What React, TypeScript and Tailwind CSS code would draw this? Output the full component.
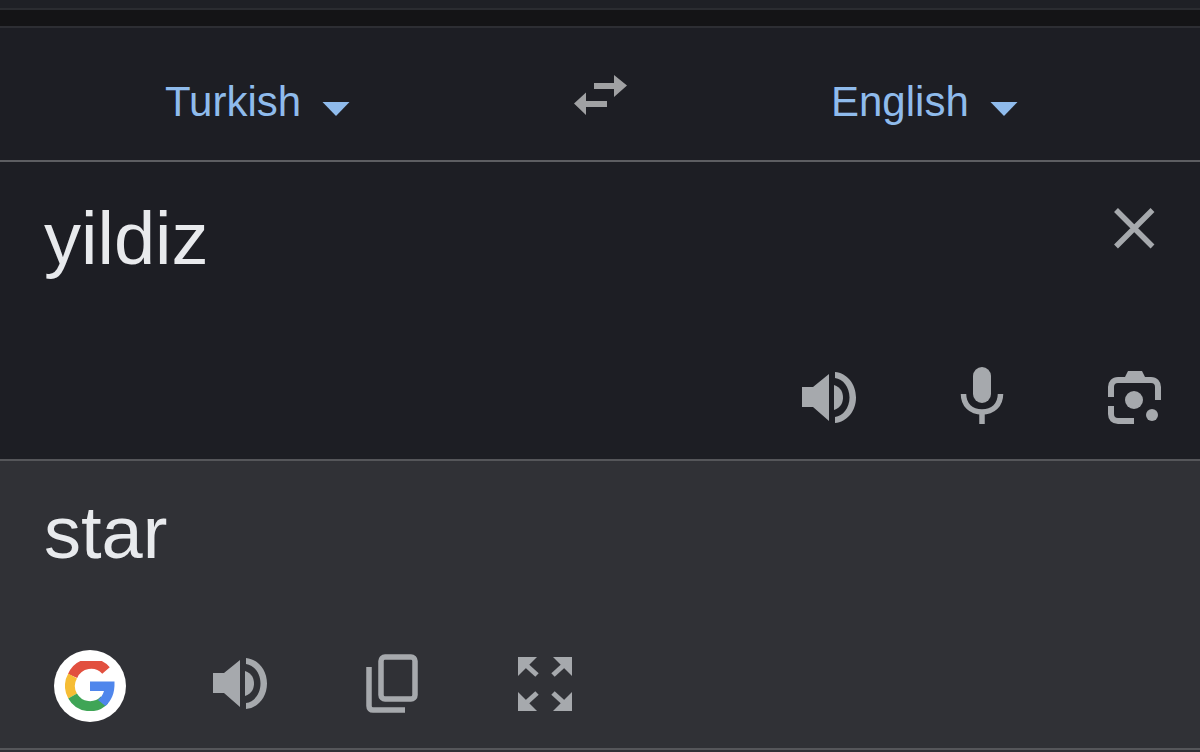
import React from "react";

const ICON = "#a6a9ad";

function Speaker() {
  return (
    <svg width="58" height="56" viewBox="0 0 58 56" fill={ICON} className="shrink-0 block">
      <path d="M2 17H13L29 4V51L13 37H2Z" />
      <path d="M34 15C41 17 43 23 43 27.5C43 32 41 38 34 40Z" />
      <path d="M35 2C47 3 56 14 56 27.5C56 41 47 52 35 53V47C43 46 49.5 38 49.5 27.5C49.5 17 43 9 35 8Z" />
    </svg>
  );
}

function Triangle() {
  return (
    <svg width="28" height="14" viewBox="0 0 28 14" fill="#8fbbec" className="shrink-0 block">
      <path d="M0.5 0H27.5L14 14Z" />
    </svg>
  );
}

function Lang({ name, className }: { name: string; className: string }) {
  return (
    <div className={`flex items-center ${className}`}>
      <span className="text-[42px] leading-[48px] text-[#8fbbec]">{name}</span>
      <div className="ml-[21px] mt-[13px]">
        <Triangle />
      </div>
    </div>
  );
}

function GoogleG() {
  return (
    <svg width="50" height="50" viewBox="0 0 50 50" fill="none" className="block">
      <path d="M41 9.5A20 20 0 0 0 7.6 15" stroke="#e2503f" strokeWidth="10" />
      <path d="M7.6 15A20 20 0 0 0 7.6 35" stroke="#f6bd35" strokeWidth="10" />
      <path d="M7.6 35A20 20 0 0 0 39.5 39" stroke="#3fa556" strokeWidth="10" />
      <path d="M49.5 20.5H25V30H39C38 34 35.5 37 33 39L40.5 45C46 40 50 33 49.5 20.5Z" fill="#4f86ec" />
    </svg>
  );
}

export default function App() {
  return (
    <div
      className="w-[1200px] h-[752px] overflow-hidden flex flex-col bg-[#1d1e24] text-[#e8eaed]"
      style={{ fontFamily: '"Liberation Sans", Arial, sans-serif' }}
    >
      <div className="h-[10px] shrink-0 bg-[#1f2026] border-b-2 border-[#2b2c31]" />
      <div className="h-[18px] shrink-0 bg-[#141416] border-b-2 border-[#2d2e33]" />

      <div className="h-[134px] shrink-0 flex border-b-2 border-[#5d5e62] pl-[165px] items-start">
        <Lang name="Turkish" className="w-[184px] mt-[50px]" />
        <svg width="54" height="42" viewBox="0 0 54 42" fill="#a0a1a3" className="shrink-0 block ml-[225px] mt-[46px]">
          <path d="M20 9H40V1L53 11.500L40 23V15H20Z" />
          <path d="M33 27H12V18.500L0 29.500L12 41V33H33Z" />
        </svg>
        <Lang name="English" className="w-[184px] ml-[203px] mt-[50px]" />
      </div>

      <div className="h-[299px] shrink-0 flex flex-col border-b-2 border-[#55565a] pl-[44px]">
        <div className="flex justify-between items-start h-[118px]">
          <div className="text-[74px] leading-[84px] mt-[35px]">yildiz</div>
          <svg width="44" height="44" viewBox="0 0 44 44" stroke={ICON} strokeWidth="5.500" className="shrink-0 block mt-[45px] mr-[43px]">
            <path d="M3 3L39.500 39.500M39.500 3L3 39.500" />
          </svg>
        </div>
        <div className="flex items-start ml-[756px] mt-[90px]">
          <Speaker />
          <svg width="44" height="58" viewBox="0 0 44 58" fill="none" className="shrink-0 block ml-[102px] -mt-[3px]">
            <rect x="13" y="0" width="18" height="36" rx="9" fill={ICON} />
            <path d="M3.500 27C3.500 38 11 45 22 45C33 45 40.500 38 40.500 27" stroke={ICON} strokeWidth="5.500" />
            <path d="M22 45V57" stroke={ICON} strokeWidth="5.500" />
          </svg>
          <svg width="56" height="56" viewBox="0 0 56 56" fill="none" className="shrink-0 block ml-[102px]">
            <path d="M5 27V17C5 13 7.500 10 12 10H45C49.500 10 52 13 52 17V30" stroke={ICON} strokeWidth="6" />
            <path d="M5 36V44C5 48.500 7.500 51 12 51H28" stroke={ICON} strokeWidth="6" />
            <path d="M18 9L22 1H36L40 9Z" fill={ICON} />
            <circle cx="28" cy="30" r="9" fill={ICON} />
            <circle cx="46" cy="45" r="6" fill={ICON} />
          </svg>
        </div>
      </div>

      <div className="h-[289px] shrink-0 flex flex-col bg-[#303136] border-b-2 border-[#55565a] pl-[44px]">
        <div className="text-[74px] leading-[84px] mt-[30px]">star</div>
        <div className="flex items-start mt-[75px] ml-[10px]">
          <div className="w-[72px] h-[72px] rounded-full bg-white flex items-center justify-center shrink-0">
            <GoogleG />
          </div>
          <div className="ml-[85px] mt-[6px]">
            <Speaker />
          </div>
          <svg width="54" height="62" viewBox="0 0 54 62" fill="none" className="shrink-0 block ml-[97px] mt-[3px]">
            <rect x="15" y="4" width="34" height="42" rx="4" stroke={ICON} strokeWidth="5.500" />
            <path d="M3 14V53C3 55.500 4.500 57 7 57H39" stroke={ICON} strokeWidth="5.500" />
          </svg>
          <svg width="54" height="54" viewBox="0 0 54 54" fill={ICON} stroke="none" className="shrink-0 block ml-[98px] mt-[7px]">
            <path d="M0 0H19L0 19Z" />
            <path d="M8 8L19 18" stroke={ICON} strokeWidth="5" />
            <path d="M54 0H35L54 19Z" />
            <path d="M46 8L35 18" stroke={ICON} strokeWidth="5" />
            <path d="M0 54H19L0 35Z" />
            <path d="M8 46L19 36" stroke={ICON} strokeWidth="5" />
            <path d="M54 54H35L54 35Z" />
            <path d="M46 46L35 36" stroke={ICON} strokeWidth="5" />
          </svg>
        </div>
      </div>
      <div className="flex-1 bg-[#303136]" />
    </div>
  );
}
